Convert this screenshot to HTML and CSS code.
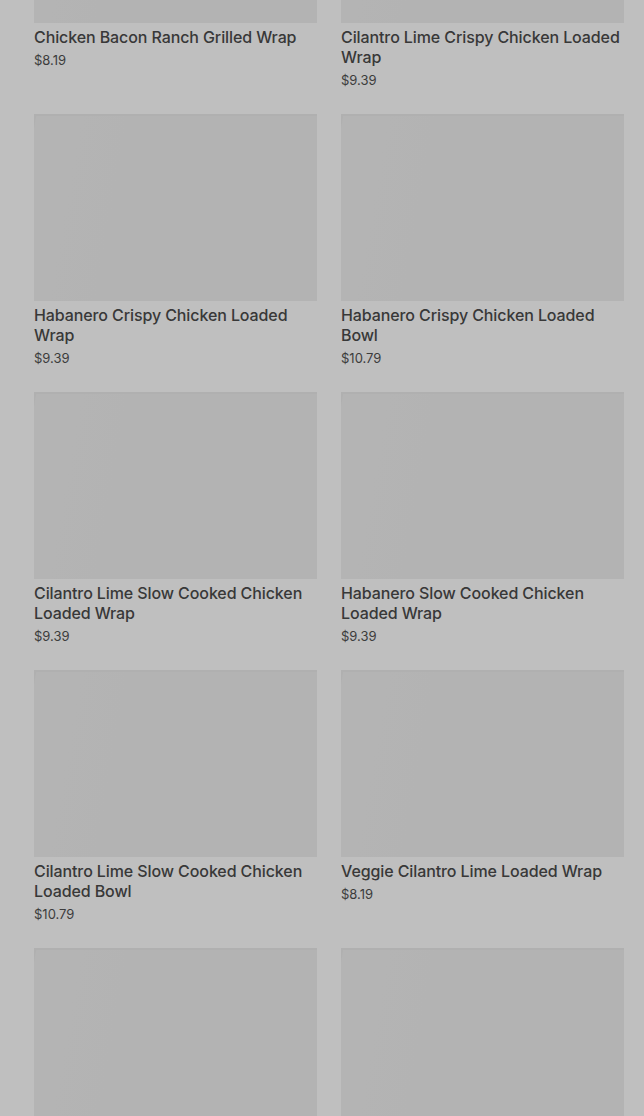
FILE: index.html
```html
<!DOCTYPE html>
<html lang="en">
<head>
  <meta charset="UTF-8">
  <meta name="viewport" content="width=device-width, initial-scale=1.0">
  <title>Menu</title>
  <link rel="stylesheet" href="styles.css">
</head>
<body>
  <div class="menu-grid">
    <a class="item" href="#">
      <div class="thumb"></div>
      <h3 class="name">Chicken Bacon Ranch Grilled Wrap</h3>
      <p class="price">$8.19</p>
    </a>
    <a class="item" href="#">
      <div class="thumb"></div>
      <h3 class="name">Cilantro Lime Crispy Chicken Loaded Wrap</h3>
      <p class="price">$9.39</p>
    </a>
    <a class="item" href="#">
      <div class="thumb"></div>
      <h3 class="name">Habanero Crispy Chicken Loaded Wrap</h3>
      <p class="price">$9.39</p>
    </a>
    <a class="item" href="#">
      <div class="thumb"></div>
      <h3 class="name">Habanero Crispy Chicken Loaded Bowl</h3>
      <p class="price">$10.79</p>
    </a>
    <a class="item" href="#">
      <div class="thumb"></div>
      <h3 class="name">Cilantro Lime Slow Cooked Chicken Loaded Wrap</h3>
      <p class="price">$9.39</p>
    </a>
    <a class="item" href="#">
      <div class="thumb"></div>
      <h3 class="name">Habanero Slow Cooked Chicken Loaded Wrap</h3>
      <p class="price">$9.39</p>
    </a>
    <a class="item" href="#">
      <div class="thumb"></div>
      <h3 class="name">Cilantro Lime Slow Cooked Chicken Loaded Bowl</h3>
      <p class="price">$10.79</p>
    </a>
    <a class="item" href="#">
      <div class="thumb"></div>
      <h3 class="name">Veggie Cilantro Lime Loaded Wrap</h3>
      <p class="price">$8.19</p>
    </a>
    <a class="item" href="#">
      <div class="thumb"></div>
    </a>
    <a class="item" href="#">
      <div class="thumb"></div>
    </a>
  </div>
</body>
</html>
```
FILE: styles.css
```css
body {
  font-family: Inter, 'Noto Sans', sans-serif;
  margin: 0;
  padding: 0;
  background-color: #bfbfbf;
  color: #383838;
  overflow: hidden;
}

.menu-grid {
  display: grid;
  grid-template-columns: 1fr 1fr;
  column-gap: 24px;
  row-gap: 24px;
  padding: 0 20px 0 34px;
  margin-top: -164px;
}

.item {
  display: block;
  color: inherit;
  text-decoration: none;
}

.thumb {
  height: 187px;
  background-color: #b3b3b3;
  background-image: linear-gradient(100deg, #b0b0b0 0, #b0b0b0 2px, #b4b4b4 3px, #b4b4b4 15%, #b3b3b3 30%, #b3b3b3 100%);
  box-shadow: inset 0 2px 0 #b0b0b0;
}

.name {
  margin: 4px 0 0;
  font-size: 16px;
  font-weight: 500;
  line-height: 20px;
  letter-spacing: -0.1px;
}

.price {
  margin: 3px 0 0;
  font-size: 13px;
  line-height: 20px;
  color: #3c3c3c;
}
```
